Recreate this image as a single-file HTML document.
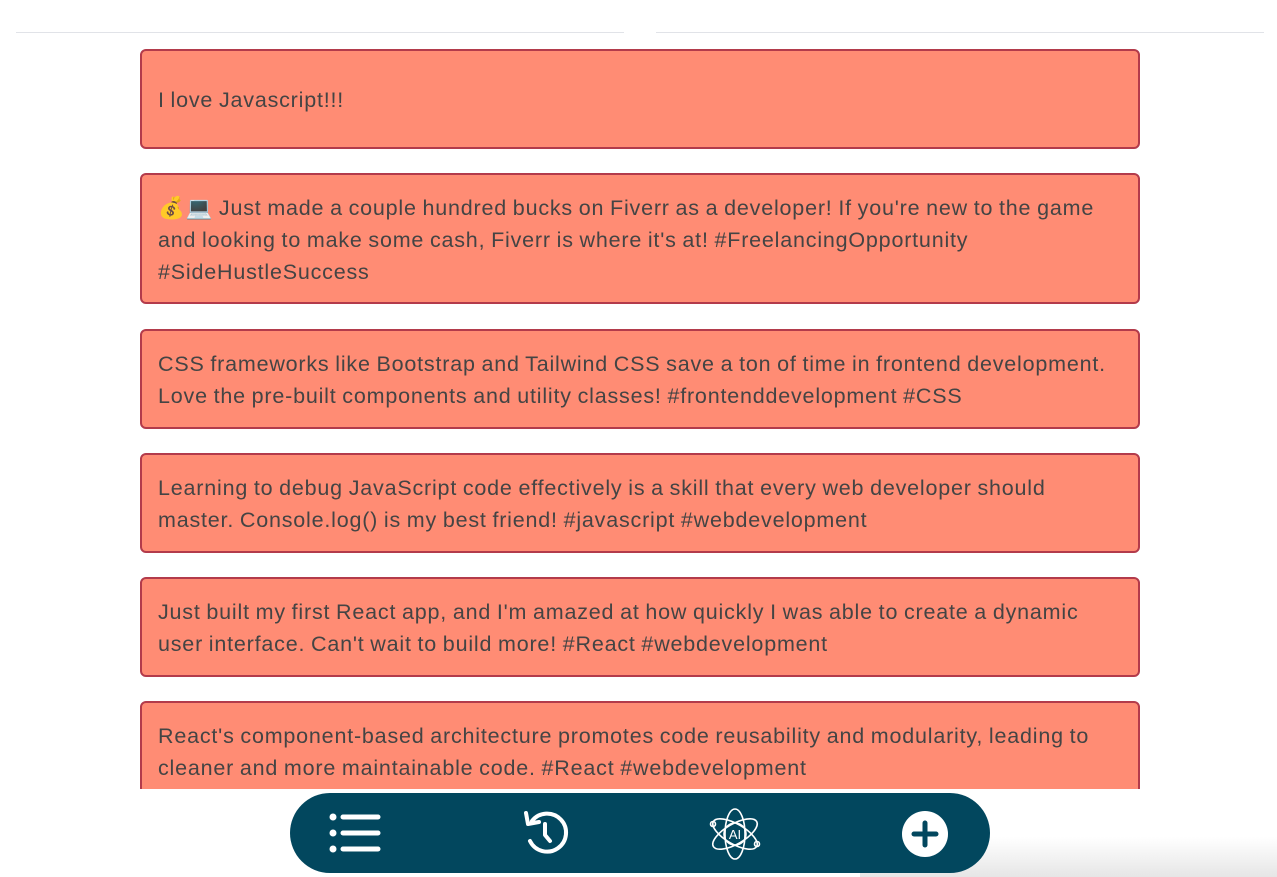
<!DOCTYPE html>
<html><head><meta charset="utf-8"><style>
html,body{margin:0;padding:0;background:#fff;width:1277px;height:877px;overflow:hidden;font-family:"Liberation Sans",Helvetica,Arial,sans-serif;}
.line{position:absolute;top:32px;height:1px;background:#e1e3e8;}
.wrap{position:absolute;left:0;top:0;width:1277px;height:789px;overflow:hidden;}
.card{position:absolute;left:140px;width:1000px;height:100px;box-sizing:border-box;background:#ff8c74;border:2px solid #b33b4b;border-radius:6px;padding:17px 16px 15px;color:#444;font-size:21.5px;letter-spacing:0.8px;word-spacing:-1px;line-height:32px;}
.nav{position:absolute;left:290px;top:793px;width:700px;height:80px;background:#02475e;border-radius:40px;}
.fade{position:absolute;left:860px;right:0;bottom:0;height:40px;background:linear-gradient(#fff,#e6e6e6);}
</style></head><body>
<div class="fade"></div>
<div class="line" style="left:16px;width:608px"></div>
<div class="line" style="left:656px;width:608px"></div>
<div class="wrap">
<div class="card" style="top:49px;display:flex;align-items:center;padding-top:2px;padding-bottom:0">I love Javascript!!!</div>
<div class="card" style="top:173px;height:131px">💰💻 Just made a couple hundred bucks on Fiverr as a developer! If you're new to the game and looking to make some cash, Fiverr is where it's at! #FreelancingOpportunity #SideHustleSuccess</div>
<div class="card" style="top:329px">CSS frameworks like Bootstrap and Tailwind CSS save a ton of time in frontend development. Love the pre-built components and utility classes! #frontenddevelopment #CSS</div>
<div class="card" style="top:453px">Learning to debug JavaScript code effectively is a skill that every web developer should master. Console.log() is my best friend! #javascript #webdevelopment</div>
<div class="card" style="top:577px">Just built my first React app, and I'm amazed at how quickly I was able to create a dynamic user interface. Can't wait to build more! #React #webdevelopment</div>
<div class="card" style="top:701px">React's component-based architecture promotes code reusability and modularity, leading to cleaner and more maintainable code. #React #webdevelopment</div>
</div>
<div class="nav">
<svg style="position:absolute;left:38px;top:19px" width="56" height="44" viewBox="0 0 56 44"><g fill="#fff"><circle cx="5" cy="5" r="3.5"/><circle cx="5" cy="21" r="3.5"/><circle cx="5" cy="37" r="3.5"/></g><g stroke="#fff" stroke-width="5" stroke-linecap="round"><line x1="15" y1="5" x2="50" y2="5"/><line x1="15" y1="21" x2="50" y2="21"/><line x1="15" y1="37" x2="50" y2="37"/></g></svg>
<svg style="position:absolute;left:232px;top:18px" width="48" height="46" viewBox="0 0 48 46"><g fill="none" stroke="#fff" stroke-width="4" stroke-linecap="round" stroke-linejoin="round"><path d="M8 30 A19 19 0 1 0 10 10"/><path d="M4 2 L6 13 L17 11"/><path d="M23 13 V24 L28 30"/></g></svg>
<svg style="position:absolute;left:418px;top:14px" width="54" height="54" viewBox="0 0 54 54"><g fill="none" stroke="#fff" stroke-width="1.6"><ellipse cx="27" cy="27" rx="10" ry="25"/><ellipse cx="27" cy="27" rx="10" ry="25" transform="rotate(60 27 27)"/><ellipse cx="27" cy="27" rx="10" ry="25" transform="rotate(-60 27 27)"/><circle cx="27" cy="27" r="11"/><circle cx="5" cy="17" r="2.5"/><circle cx="49" cy="37" r="2.5"/></g><text x="27" y="32" text-anchor="middle" fill="#fff" font-family="Liberation Sans,sans-serif" font-size="13">AI</text></svg>
<svg style="position:absolute;left:611px;top:17px" width="48" height="48" viewBox="0 0 48 48"><circle cx="24" cy="24" r="23" fill="#fff"/><g stroke="#02475e" stroke-width="5" stroke-linecap="round"><line x1="24" y1="13" x2="24" y2="35"/><line x1="13" y1="24" x2="35" y2="24"/></g></svg>
</div>
</body></html>
